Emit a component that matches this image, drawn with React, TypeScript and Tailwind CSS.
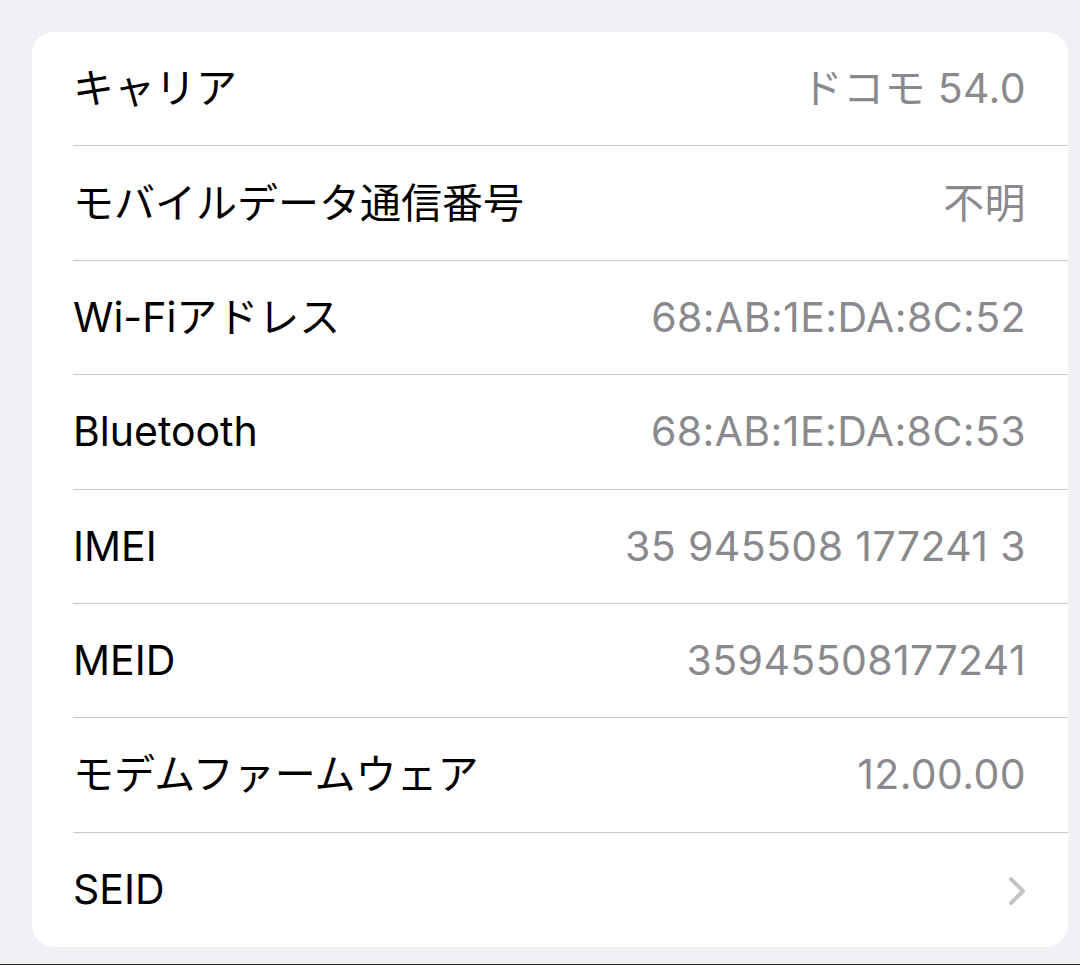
import React from "react";

const rows: { label: string; value?: string; chevron?: boolean }[] = [
  { label: "キャリア", value: "ドコモ 54.0" },
  { label: "モバイルデータ通信番号", value: "不明" },
  { label: "Wi-Fiアドレス", value: "68:AB:1E:DA:8C:52" },
  { label: "Bluetooth", value: "68:AB:1E:DA:8C:53" },
  { label: "IMEI", value: "35 945508 177241 3" },
  { label: "MEID", value: "35945508177241" },
  { label: "モデムファームウェア", value: "12.00.00" },
  { label: "SEID", chevron: true },
];

export default function App() {
  return (
    <div
      className="w-[1080px] h-[965px] bg-[#f0f0f5] flex flex-col overflow-hidden"
      style={{ fontFamily: 'Inter, "Noto Sans CJK JP", sans-serif' }}
    >
      <div className="flex-1 pt-[32px] pl-[32px] pr-[12px]">
        <div className="w-[1036px] h-[915px] bg-white rounded-[22px] flex flex-col overflow-hidden">
          {rows.map((r, i) => (
            <div key={r.label} className="flex-1 flex pl-[41px]">
              <div
                className={`flex-1 flex items-center justify-between pr-[42px] ${
                  i < rows.length - 1 ? "border-b border-[#c8c8cc]" : ""
                }`}
              >
                <span className="text-[41px] leading-none text-black">
                  {r.label}
                </span>
                {r.value && (
                  <span className="text-[41px] leading-none text-[#8a8a8e] tracking-[0.4px]">
                    {r.value}
                  </span>
                )}
                {r.chevron && (
                  <svg width="18" height="30" viewBox="0 0 18 30" className="mt-[2px]">
                    <polyline
                      points="3,3 15,15 3,27"
                      fill="none"
                      stroke="#c4c4c7"
                      strokeWidth="4"
                      strokeLinecap="round"
                      strokeLinejoin="round"
                    />
                  </svg>
                )}
              </div>
            </div>
          ))}
        </div>
      </div>
      <div className="h-[1px] bg-[#2a2a2a]" />
    </div>
  );
}
